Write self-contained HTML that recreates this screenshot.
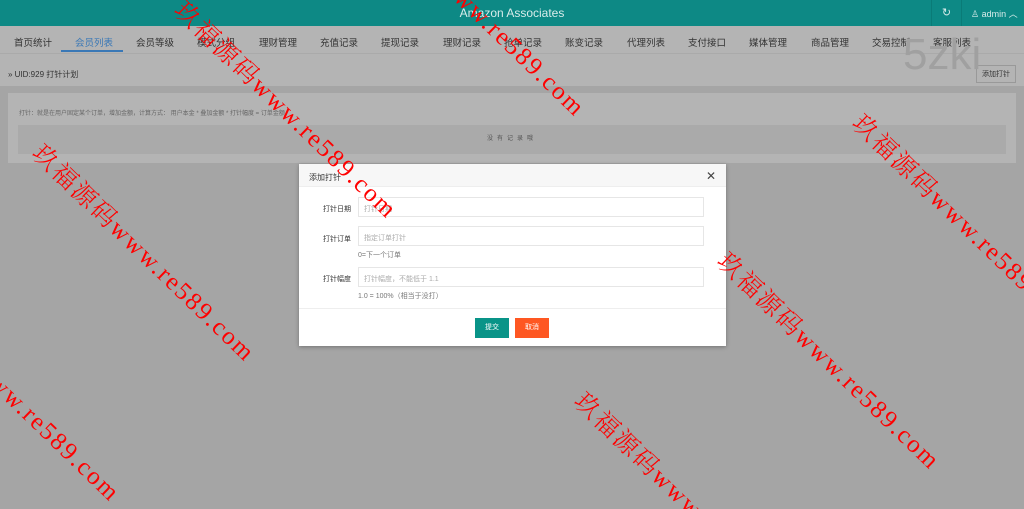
<!DOCTYPE html>
<html style="width:1024px;height:509px;overflow:hidden"><head><meta charset="utf-8"><style>
*{margin:0;padding:0;box-sizing:border-box}
body{width:1024px;height:509px;overflow:hidden;position:relative;background:#a5a5a5;font-family:"Liberation Sans","Noto Sans CJK SC",sans-serif;}
.hd{position:absolute;left:0;top:0;width:1024px;height:26px;background:#0d8985;color:#d8ecea;}
.hd .t{position:absolute;left:0;width:1024px;text-align:center;top:6px;font-size:12px}
.hd .r1{position:absolute;left:931px;top:0;width:31px;height:26px;border-left:1px solid #0a7b77;border-right:1px solid #0a7b77;text-align:center;font-size:11px;line-height:26px}
.hd .r2{position:absolute;left:971px;top:7px;font-size:9px}
.nav{position:absolute;top:26px;left:0;width:1024px;height:27px;background:#b4b4b4;}
.nav span{position:absolute;top:9px;font-size:9.5px;color:#333}
.nav .act{color:#3a78b6}
.bc{position:absolute;top:53px;left:0;width:1024px;height:33px;background:#b4b4b4;border-top:1px solid #aaa}
.bc .l{position:absolute;left:8px;top:15px;font-size:8px;color:#333}
.bc .b{position:absolute;right:8px;top:11px;border:1px solid #999;font-size:7px;padding:3px 5px;color:#333;background:#b4b4b4}
.card{position:absolute;left:8px;top:93px;width:1008px;height:70px;background:#b4b4b4}
.card .tip{position:absolute;left:11px;top:15px;font-size:6px;color:#666}
.card .nr{position:absolute;left:10px;top:32px;width:988px;height:29px;background:#aaa;text-align:center;line-height:29px;font-size:6px;letter-spacing:4px;color:#555}
.z{position:absolute;left:903px;top:30px;font-size:44px;color:#a0a0a0;font-family:"Liberation Sans",sans-serif}
.m{position:absolute;left:299px;top:164px;width:427px;height:182px;background:#fff;box-shadow:0 1px 4px rgba(0,0,0,.3)}
.m .h{height:23px;background:#f7f7f7;border-bottom:1px solid #eee;font-size:8px;color:#333;padding:8px 10px}
.m .x{position:absolute;right:10px;top:5px;font-size:12px;color:#444}
.lab{position:absolute;left:24px;font-size:7px;color:#333}
.in{position:absolute;left:59px;width:346px;height:20px;border:1px solid #e6e6e6;font-size:7px;color:#aaa;padding:6px 5px}
.hint{position:absolute;left:59px;font-size:7px;color:#777}
.ln{position:absolute;left:0;top:144px;width:427px;border-top:1px solid #eee}
.btn{position:absolute;top:154px;height:20px;width:34px;color:#fff;font-size:7px;text-align:center;line-height:20px}
.w{position:absolute;color:#f00;font-family:"Liberation Serif","Noto Serif CJK SC",serif;font-size:25px;font-weight:300;transform-origin:0 0;transform:rotate(44deg);white-space:nowrap;letter-spacing:2px}
</style></head><body>
<div class="hd"><div class="t">Amazon Associates</div><div class="r1">↻</div><div class="r2">♙ admin ︿</div></div>
<div class="nav">
<span style="left:14px">首页统计</span><span class="act" style="left:75px">会员列表</span>
<div style="position:absolute;left:61px;top:24px;width:62px;height:2px;background:#3a78b6"></div>
<span style="left:136px">会员等级</span><span style="left:197px">模式分组</span><span style="left:259px">理财管理</span><span style="left:320px">充值记录</span><span style="left:381px">提现记录</span><span style="left:443px">理财记录</span><span style="left:504px">抢单记录</span><span style="left:565px">账变记录</span><span style="left:627px">代理列表</span><span style="left:688px">支付接口</span><span style="left:749px">媒体管理</span><span style="left:811px">商品管理</span><span style="left:872px">交易控制</span><span style="left:933px">客服列表</span>
</div>
<div class="bc"><div class="l">» UID:929 打针计划</div><div class="b">添加打针</div></div>
<div class="z">5zki</div>
<div class="card"><div class="tip">打针：就是在用户固定某个订单，增加金额，计算方式： 用户本金 * 叠加金额 * 打针幅度 = 订单金额</div><div class="nr">没有记录哦</div></div>
<div class="m"><div class="h">添加打针</div><div class="x">✕</div>
<div class="lab" style="top:40px">打针日期</div><div class="in" style="top:33px">打针日期</div>
<div class="lab" style="top:70px">打针订单</div><div class="in" style="top:62px">指定订单打针</div><div class="hint" style="top:86px">0=下一个订单</div>
<div class="lab" style="top:110px">打针幅度</div><div class="in" style="top:103px">打针幅度，不能低于 1.1</div><div class="hint" style="top:127px">1.0 = 100%（相当于没打）</div>
<div class="ln"></div>
<div class="btn" style="left:176px;background:#099488">提交</div><div class="btn" style="left:216px;background:#fe5722">取消</div>
</div>
<div class="w" style="left:192px;top:-8px">玖福源码www.re589.com</div>
<div class="w" style="left:380px;top:-110px">玖福源码www.re589.com</div>
<div class="w" style="left:50px;top:135px">玖福源码www.re589.com</div>
<div class="w" style="left:870px;top:105px">玖福源码www.re589.com</div>
<div class="w" style="left:735px;top:243px">玖福源码www.re589.com</div>
<div class="w" style="left:592px;top:383px">玖福源码www.re589.com</div>
<div class="w" style="left:-85px;top:275px">玖福源码www.re589.com</div>
</body></html>
